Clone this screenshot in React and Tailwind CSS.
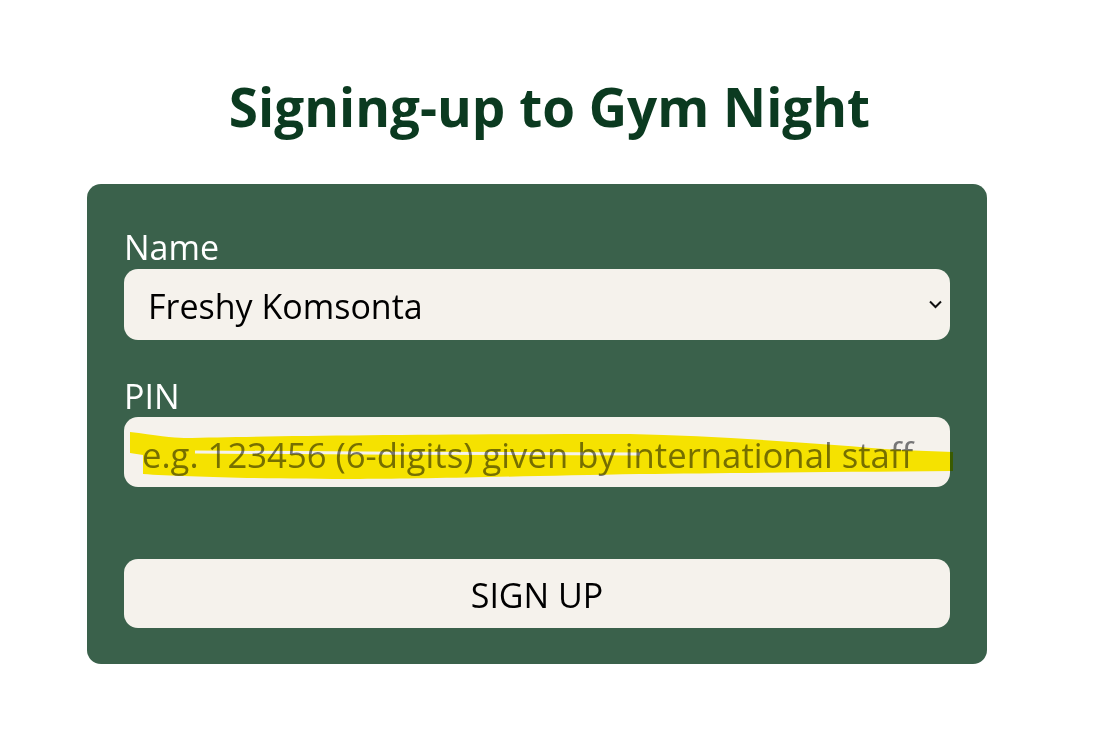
import { useState } from 'react';

const font = { fontFamily: '"Open Sans", "Noto Sans", sans-serif' };

/* ── the yellow marker stroke that sits over the PIN placeholder ── */
const Highlight = () => (
  <svg
    className="absolute left-0 top-0 pointer-events-none mix-blend-multiply overflow-visible"
    width="830"
    height="70"
    viewBox="0 0 830 70"
  >
    <path
      d="M6,15 C30,18 50,21 60,21 C150,19 300,17 506,17 C600,19 700,27 776,33 L829,35 L829,54 C700,55 600,56 516,57 C400,59 300,62 236,62 C150,62 60,60 19,57 L19,38 L6,36 Z"
      fill="#ffef00"
    />
    <path d="M71,35 C200,36 400,37 516,37" stroke="#ffffff" strokeWidth="3" fill="none" />
  </svg>
);

const App = () => {
  const [name, setName] = useState('Freshy Komsonta');
  const [pin, setPin] = useState('');

  return (
    <div className="min-h-screen bg-white" style={font}>
      <h1 className="pt-[73px] text-center text-[53px] leading-[68px] font-bold text-[#0b3a20]">
        Signing-up to Gym Night
      </h1>

      <form
        onSubmit={(e) => e.preventDefault()}
        className="mt-[43px] ml-[87px] w-[900px] bg-[#3a614b] rounded-[14px] px-[37px] pt-[43px] pb-[36px]"
      >
        {/* Name */}
        <label className="block text-[34px] leading-[40px] text-white">Name</label>
        <div className="relative mt-[2px]">
          <select
            value={name}
            onChange={(e) => setName(e.target.value)}
            className="appearance-none w-full h-[71px] rounded-[14px] bg-[#f5f2ec] pl-6 pr-12 pt-1 text-[34px] text-black outline-none"
            style={font}
          >
            <option>Freshy Komsonta</option>
          </select>
          <svg
            className="absolute right-[8px] top-[31px] pointer-events-none"
            width="13"
            height="9"
            viewBox="0 0 13 9"
          >
            <path d="M1,1.5 L6.5,7 L12,1.5" stroke="#111" strokeWidth="2" fill="none" />
          </svg>
        </div>

        {/* PIN */}
        <label className="block mt-[36px] text-[34px] leading-[40px] text-white">PIN</label>
        <div className="relative mt-px">
          <input
            value={pin}
            onChange={(e) => setPin(e.target.value)}
            placeholder="e.g. 123456 (6-digits) given by international staff"
            className="w-full h-[70px] rounded-[14px] bg-[#f5f2ec] pl-[18px] pt-1 text-[34.7px] text-black placeholder:text-[#767676] outline-none"
            style={font}
          />
          <Highlight />
        </div>

        <button
          type="submit"
          className="mt-[72px] w-full h-[69px] rounded-[14px] bg-[#f5f2ec] pt-1 text-[34px] text-black"
          style={font}
        >
          SIGN UP
        </button>
      </form>
    </div>
  );
};

export default App;
